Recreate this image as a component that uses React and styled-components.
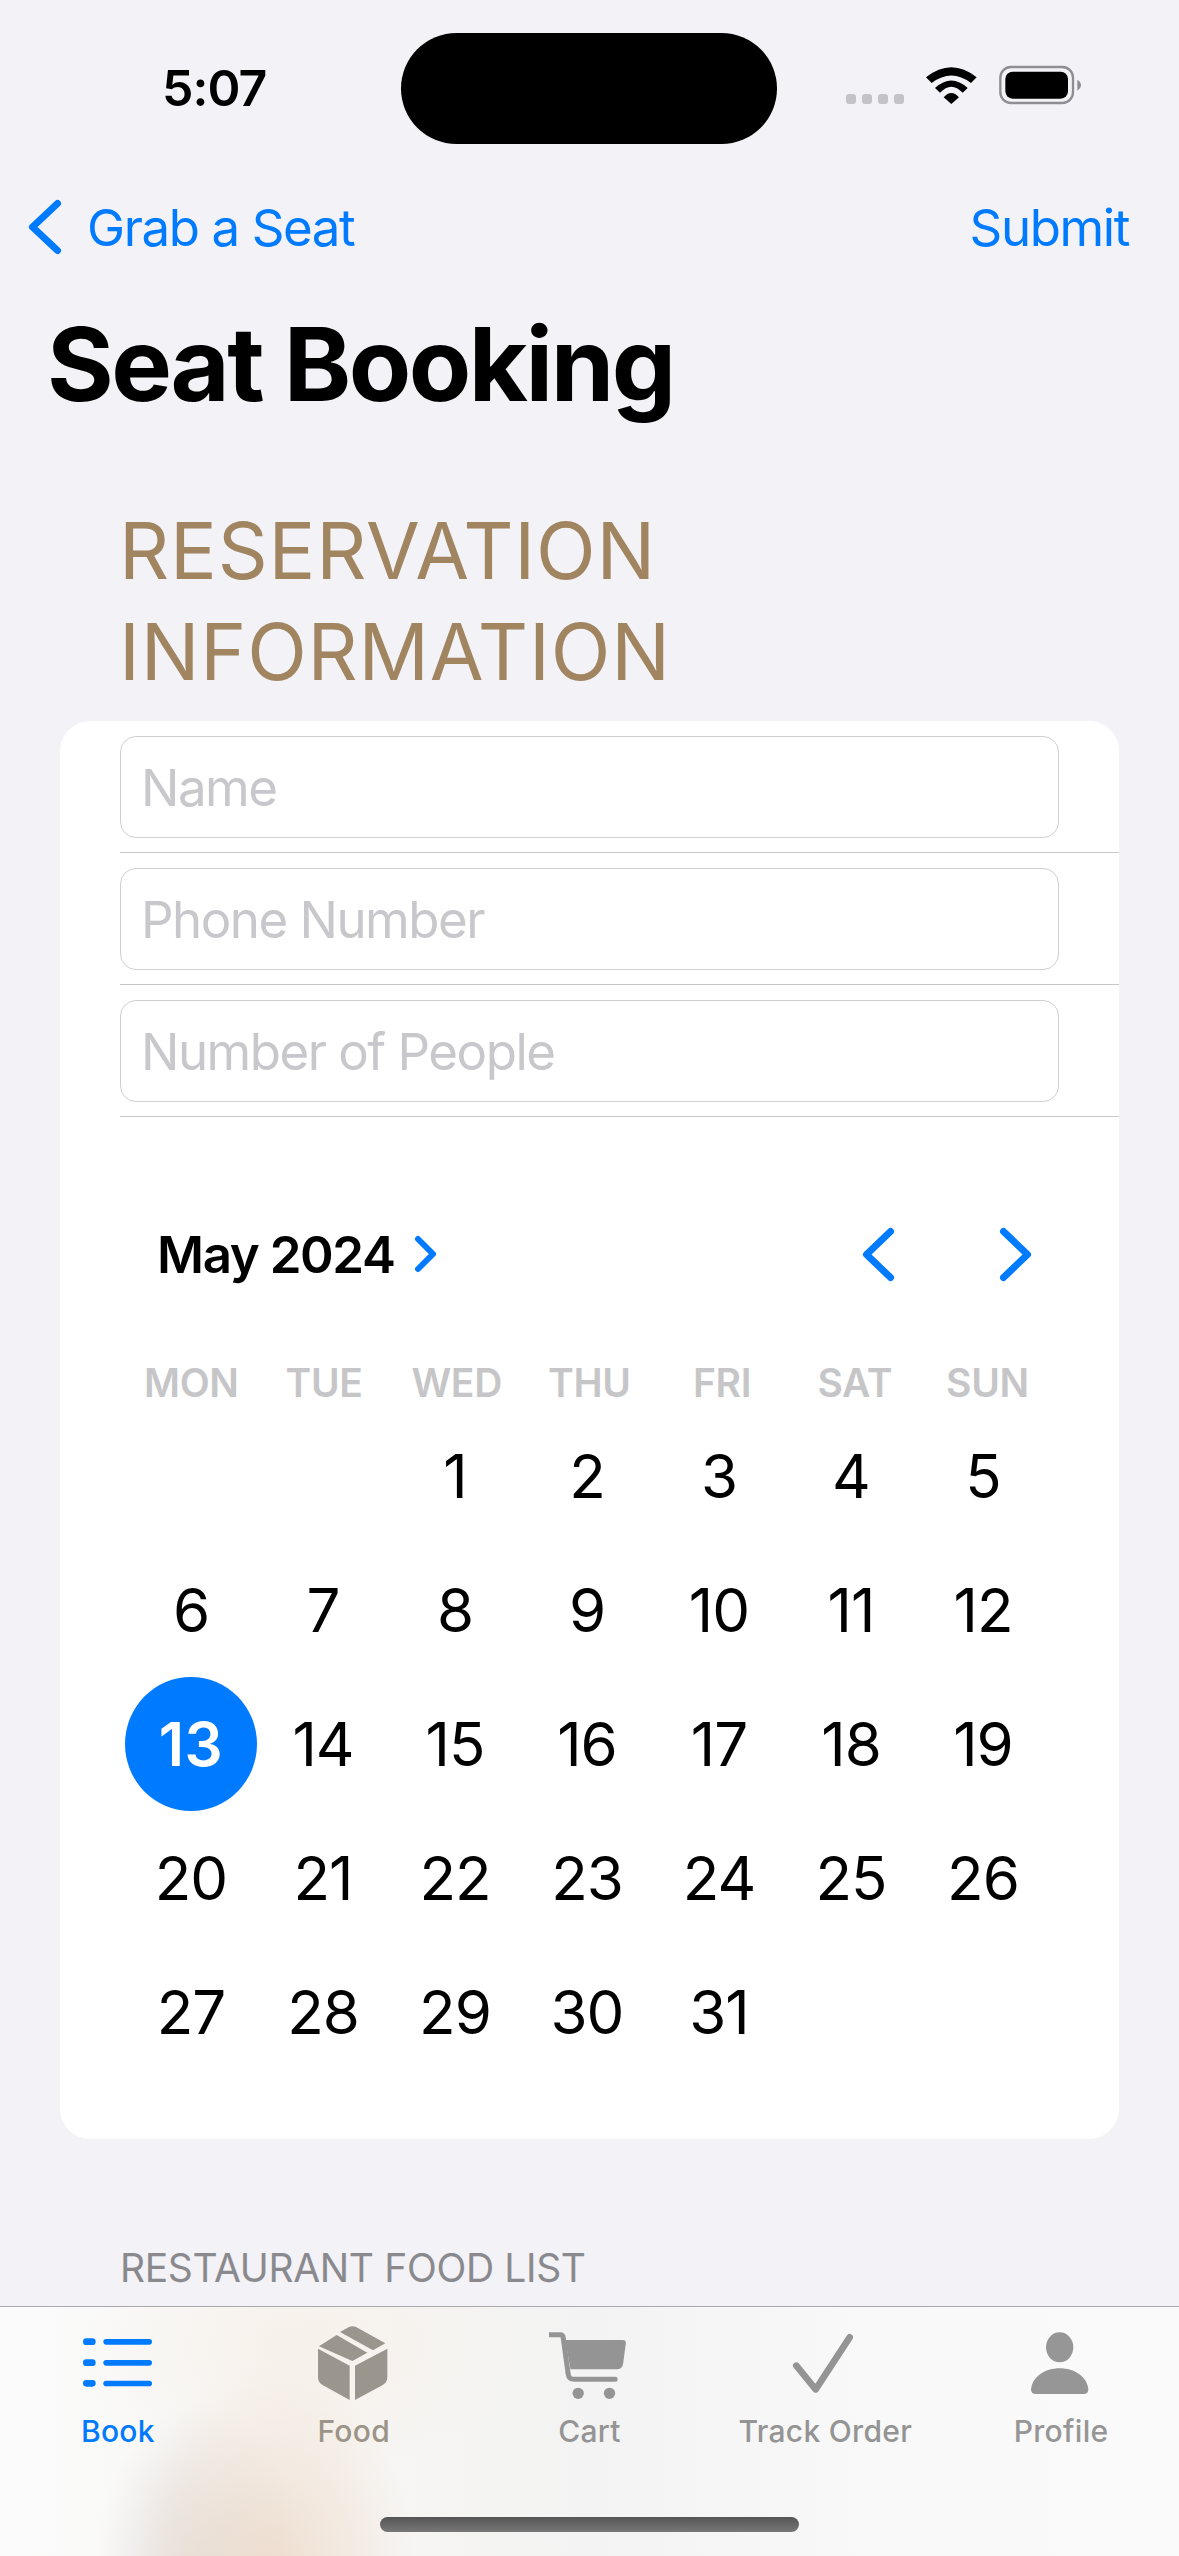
import React from 'react';
import styled, { createGlobalStyle } from 'styled-components';

const Global = createGlobalStyle`
  html, body { margin: 0; padding: 0; background: #f2f2f7; }
  * { box-sizing: border-box; }
  body { font-family: Inter, "Noto Sans", sans-serif; -webkit-font-smoothing: antialiased; }
`;

const Page = styled.div`
  position: relative;
  width: 1179px;
  height: 2556px;
  overflow: hidden;
  background: #f2f2f7;
`;
const Island = styled.div`
  position: absolute;
  left: 401px;
  top: 33px;
  width: 376px;
  height: 111px;
  border-radius: 56px;
  background: #000;
`;
const StatusBar = styled.div`
  height: 176px;
  display: flex;
  align-items: center;
  justify-content: space-between;
  padding: 0 59px 0 162px;
`;
const Clock = styled.div`
  font-size: 50px;
  font-weight: 600;
  letter-spacing: -1px;
  color: #000;
`;
const StatusIcons = styled.svg`
  display: block;
  width: 340px;
  height: 100px;
`;
const Nav = styled.div`
  height: 102px;
  display: flex;
  align-items: center;
  justify-content: space-between;
  padding: 0 50px 0 28px;
`;
const NavBack = styled.div`
  display: flex;
  align-items: center;
  gap: 25px;
`;
const NavText = styled.span`
  font-size: 51px;
  color: #007aff;
  letter-spacing: -1.4px;
`;
const Chevron = styled.svg`
  display: block;
  fill: none;
  stroke: #007aff;
  stroke-linecap: round;
  stroke-linejoin: round;
`;
const Title = styled.h1`
  margin: 0;
  height: 169px;
  padding-left: 47px;
  font-size: 102px;
  line-height: 172px;
  font-weight: 700;
  letter-spacing: -2.5px;
  color: #000;
`;
const SectionHead = styled.div`
  margin: 53px 0 19px;
  padding: 0 100px 0 119px;
  font-size: 78px;
  line-height: 101px;
  font-weight: 400;
  letter-spacing: 0.8px;
  color: #a08560;
  text-transform: uppercase;
`;
const Card = styled.div`
  margin: 0 60px;
  height: 1418px;
  border-radius: 30px;
  background: #fff;
  overflow: hidden;
`;
const Row = styled.div`
  height: 132px;
  margin-left: 60px;
  padding: 15px 60px 15px 0;
  border-bottom: 1px solid #c6c6c8;
`;
const Field = styled.input`
  display: block;
  width: 100%;
  height: 102px;
  padding: 0 20px;
  border: 1px solid #cfcfd1;
  border-radius: 16px;
  outline: none;
  background: #fff;
  font-family: Inter, sans-serif;
  font-size: 51px;
  letter-spacing: -1.5px;
  &::placeholder { color: #c7c7cc; opacity: 1; }
`;
const Calendar = styled.div`
  padding: 103px 0 0 65px;
`;
const CalHead = styled.div`
  height: 68px;
  display: flex;
  align-items: center;
  justify-content: space-between;
  padding: 0 87px 0 32px;
`;
const Month = styled.div`
  display: flex;
  align-items: center;
  gap: 19px;
  font-size: 51px;
  font-weight: 600;
  letter-spacing: -1.4px;
  color: #000;
`;
const Pager = styled.div`
  display: flex;
  gap: 104px;
`;
const Grid = styled.div`
  display: grid;
  grid-template-columns: repeat(7, 132px);
`;
const Weekdays = styled.div`
  display: grid;
  grid-template-columns: repeat(7, 132.7px);
  margin-top: 63px;
  height: 62px;
  align-items: center;
`;
const Weekday = styled.div`
  text-align: center;
  font-size: 39px;
  font-weight: 600;
  letter-spacing: -0.3px;
  color: #c6c6c8;
`;
const Days = styled(Grid)`
  margin-top: -4px;
  grid-auto-rows: 134px;
`;
const Day = styled.div`
  width: 132px;
  height: 134px;
  display: flex;
  align-items: center;
  justify-content: center;
  font-size: 60px;
  letter-spacing: ${p => (p.$selected ? '0.5px' : '-1px')};
  font-weight: ${p => (p.$selected ? 600 : 400)};
  color: ${p => (p.$selected ? '#fff' : '#000')};
  border-radius: 50%;
  background: ${p => (p.$selected ? '#007aff' : 'transparent')};
`;
const Footer = styled.div`
  margin-top: 100px;
  padding-left: 120px;
  font-size: 39px;
  line-height: 58px;
  color: #8a8a8e;
  letter-spacing: -0.35px;
`;
const TabBar = styled.div`
  position: absolute;
  left: 0;
  right: 0;
  bottom: 0;
  height: 250px;
  display: grid;
  grid-template-columns: repeat(5, 1fr);
  padding-top: 15px;
  border-top: 1px solid #a9a9ae;
  background:
    radial-gradient(ellipse 140px 210px at 275px 265px, rgba(236, 216, 198, 0.8), rgba(240, 226, 212, 0.5) 60%, rgba(249, 249, 249, 0) 100%),
    radial-gradient(ellipse 105px 170px at 200px 265px, rgba(216, 208, 204, 0.75), rgba(249, 249, 249, 0) 100%),
    radial-gradient(ellipse 220px 130px at 300px 40px, rgba(246, 239, 231, 0.8), rgba(249, 249, 249, 0) 100%),
    linear-gradient(90deg, #fbfbfb 0, #f7f6f4 30%, #f3f3f3 50%, #f9f9f9 75%, #fafafa 100%);
`;
const Tab = styled.div`
  display: flex;
  flex-direction: column;
  align-items: center;
`;
const TabIcon = styled.svg`
  display: block;
  width: 80px;
  height: 80px;
  color: ${p => p.$color};
`;
const TabLabel = styled.div`
  margin-top: 11px;
  font-size: 30px;
  line-height: 36px;
  font-weight: 500;
  letter-spacing: 0.3px;
  white-space: nowrap;
  color: ${p => p.$color};
`;
const HomeIndicator = styled.div`
  position: absolute;
  left: 380px;
  bottom: 24px;
  width: 419px;
  height: 15px;
  border-radius: 8px;
  background: linear-gradient(#555, #777);
`;

const days = [null, null, 1, 2, 3, 4, 5, 6, 7, 8, 9, 10, 11, 12, 13, 14, 15, 16, 17, 18, 19, 20, 21, 22, 23, 24, 25, 26, 27, 28, 29, 30, 31];
const weekdays = ['MON', 'TUE', 'WED', 'THU', 'FRI', 'SAT', 'SUN'];

const tabs = [
  {
    label: 'Book', color: '#007aff', labelColor: '#007aff', viewBox: '54 66 240 240',
    shape: (
      <g fill="currentColor">
        <rect x="69" y="115" width="38" height="20" rx="10" />
        <rect x="69" y="178" width="38" height="20" rx="10" />
        <rect x="69" y="240" width="38" height="20" rx="10" />
        <rect x="130" y="117" width="146" height="17" rx="8.5" />
        <rect x="130" y="180" width="146" height="17" rx="8.5" />
        <rect x="130" y="242" width="146" height="17" rx="8.5" />
      </g>
    ),
  },
  {
    label: 'Food', color: '#9a958d', labelColor: '#9c9489', viewBox: '761 66 240 240',
    shape: (
      <g fill="currentColor">
        <path d="M839 96 L866 81 Q876 76 887 81 L975 130 L938 151 Z" />
        <path d="M776 139 L829 105 L921 158 L876 183 Z" />
        <path d="M773 146 L868 197 L868 300 L788 256 Q773 248 773 232 Z" />
        <path d="M981 146 L884 197 L884 300 L966 256 Q981 248 981 232 Z" />
      </g>
    ),
  },
  {
    label: 'Cart', color: '#949494', labelColor: '#949494', viewBox: '88.5 66 240 240',
    shape: (
      <g fill="currentColor">
        <path d="M137 120 L310 120 Q320 120 319 130 L311 190 Q309 208 292 208 L153 208 Z" />
        <path d="M92 104 L122 104 Q130 104 131 112 L146 222 Q148 238 164 238 L287 238" fill="none" stroke="currentColor" strokeWidth="15" strokeLinecap="round" />
        <circle cx="176" cy="280" r="17" />
        <circle cx="270" cy="280" r="17" />
      </g>
    ),
  },
  {
    label: 'Track Order', color: '#949494', labelColor: '#949494', viewBox: '796 66 240 240',
    shape: <path d="M830 197 L888 268 L990 112" fill="none" stroke="currentColor" strokeWidth="20" strokeLinecap="round" strokeLinejoin="round" />,
  },
  {
    label: 'Profile', color: '#969696', labelColor: '#969696', viewBox: '543 66 240 240',
    shape: (
      <g fill="currentColor">
        <ellipse cx="659" cy="142" rx="41" ry="45" />
        <path d="M573 268 C577 230 615 205 659 205 C703 205 741 230 745 268 Q745 282 731 282 L587 282 Q573 282 573 268 Z" />
      </g>
    ),
  },
];

const ChevronShape = ({ dir, w, h, sw }) => (
  <Chevron width={w} height={h} viewBox={`0 0 ${w} ${h}`} strokeWidth={sw}>
    <path d={dir === 'left'
      ? `M${w - sw / 2 - 1} ${sw / 2 + 1} L${sw / 2 + 1} ${h / 2} L${w - sw / 2 - 1} ${h - sw / 2 - 1}`
      : `M${sw / 2 + 1} ${sw / 2 + 1} L${w - sw / 2 - 1} ${h / 2} L${sw / 2 + 1} ${h - sw / 2 - 1}`} />
  </Chevron>
);

export default function App() {
  return (
    <Page>
      <Global />
      <StatusBar>
        <Clock>5:07</Clock>
        <StatusIcons viewBox="0 0 1020 300">
          <g fill="#c4c4c8">
            <rect x="198" y="168" width="30" height="30" rx="9" />
            <rect x="246" y="168" width="30" height="30" rx="9" />
            <rect x="294" y="168" width="30" height="30" rx="9" />
            <rect x="342" y="168" width="30" height="30" rx="9" />
          </g>
          <g fill="#000">
            <path d="M438 118 Q514 58 590 118 L573 135 Q514 90 455 135 Z" />
            <path d="M465 150 Q514 105 563 150 L548 164 Q514 128 480 164 Z" />
            <path d="M491 178 Q514 152 537 178 L514 198 Z" />
          </g>
          <rect x="661" y="87" width="218" height="108" rx="32" fill="none" stroke="#8e8e93" strokeWidth="7" />
          <rect x="676" y="101" width="188" height="81" rx="22" fill="#000" />
          <path d="M892 125 Q903 132 903 141 Q903 150 892 158 Z" fill="#8e8e93" />
        </StatusIcons>
      </StatusBar>
      <Island />
      <Nav>
        <NavBack>
          <ChevronShape dir="left" w={34} h={56} sw={7} />
          <NavText>Grab a Seat</NavText>
        </NavBack>
        <NavText>Submit</NavText>
      </Nav>
      <Title>Seat Booking</Title>
      <SectionHead>Reservation Information</SectionHead>
      <Card>
        <Row><Field placeholder="Name" /></Row>
        <Row><Field placeholder="Phone Number" /></Row>
        <Row><Field placeholder="Number of People" /></Row>
        <Calendar>
          <CalHead>
            <Month>
              May 2024
              <ChevronShape dir="right" w={23} h={38} sw={6} />
            </Month>
            <Pager>
              <ChevronShape dir="left" w={33} h={55} sw={7} />
              <ChevronShape dir="right" w={33} h={55} sw={7} />
            </Pager>
          </CalHead>
          <Weekdays>
            {weekdays.map(d => <Weekday key={d}>{d}</Weekday>)}
          </Weekdays>
          <Days>
            {days.map((d, i) => <Day key={i} $selected={d === 13}>{d}</Day>)}
          </Days>
        </Calendar>
      </Card>
      <Footer>RESTAURANT FOOD LIST</Footer>
      <TabBar>
        {tabs.map(t => (
          <Tab key={t.label}>
            <TabIcon viewBox={t.viewBox} $color={t.color}>{t.shape}</TabIcon>
            <TabLabel $color={t.labelColor}>{t.label}</TabLabel>
          </Tab>
        ))}
        <HomeIndicator />
      </TabBar>
    </Page>
  );
}
